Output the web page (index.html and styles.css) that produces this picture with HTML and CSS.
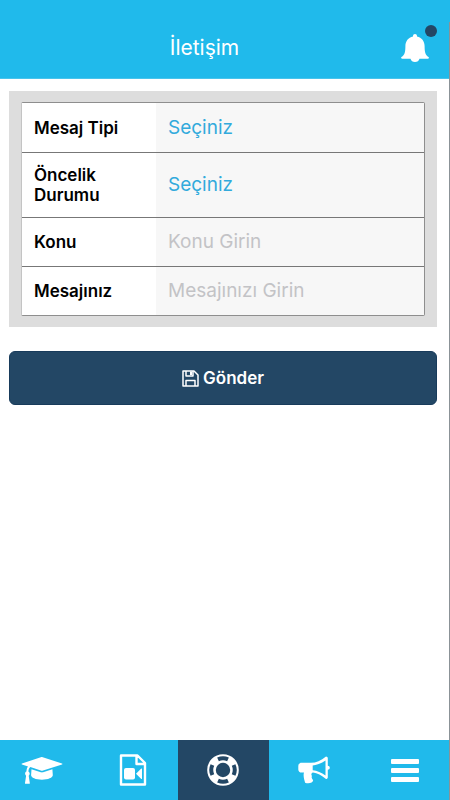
FILE: index.html
```html
<!DOCTYPE html>
<html lang="tr">
<head>
<meta charset="utf-8">
<meta name="viewport" content="width=device-width, initial-scale=1">
<title>İletişim</title>
<link rel="stylesheet" href="styles.css">
</head>
<body>
<div class="app">
  <header class="header">
    <h1 class="title">İletişim</h1>
    <button class="bell" type="button" aria-label="Bildirimler">
      <svg width="28" height="30" viewBox="0 0 28 30"><path fill="#fff" d="M14 1c1.200 0 2 .7 2 2v.4c4.700.9 7.600 4.800 7.600 9.600 0 6 .6 9 3.900 11 .7.500.4 1.700-.5 1.700h-8.500c-.4 2-2.300 3.300-4.500 3.300s-4.100-1.300-4.500-3.300H1c-.9 0-1.200-1.200-.5-1.700C3.800 22 4.400 19 4.400 13c0-4.800 2.900-8.700 7.600-9.600V3c0-1.300.8-2 2-2z"/></svg>
      <span class="dot"></span>
    </button>
  </header>
  <main class="main">
    <form class="form">
      <div class="card">
        <div class="fields">
          <div class="row">
            <label class="label" for="type">Mesaj Tipi</label>
            <select class="control" id="type"><option>Seçiniz</option></select>
          </div>
          <div class="row">
            <label class="label" for="priority">Öncelik Durumu</label>
            <select class="control" id="priority"><option>Seçiniz</option></select>
          </div>
          <div class="row">
            <label class="label" for="subject">Konu</label>
            <input class="control" id="subject" type="text" placeholder="Konu Girin">
          </div>
          <div class="row">
            <label class="label" for="message">Mesajınız</label>
            <input class="control" id="message" type="text" placeholder="Mesajınızı Girin">
          </div>
        </div>
      </div>
      <button class="submit" type="button">
        <svg width="17" height="17" viewBox="0 0 17 17" fill="none" stroke="#fff" stroke-width="1.500" stroke-linejoin="round"><path d="M1 1h11l4 4v11H1z"/><path d="M4 1v5h7V1M4 16v-5.500h9V16"/><path fill="#fff" stroke="none" d="M8 1.500h2V5H8z"/></svg>
        Gönder
      </button>
    </form>
  </main>
  <nav class="tabs">
    <a class="tab" href="#egitim" aria-label="Eğitim">
      <svg width="42" height="30" viewBox="0 0 42 30"><path fill="#fff" d="M21 2l20 6.500c.6.200.6.800 0 1L21.300 15.700h-.8L9.400 12.100C8.200 13 7.500 14.500 7.400 16.600c.8.500 1.300 1.200 1.300 2.100 0 .8-.4 1.500-1 2L8.800 28c.1.500-.2.800-.6.800H4.600c-.4 0-.7-.3-.6-.8l1.100-7.300c-.6-.5-1-1.200-1-2 0-.9.500-1.700 1.300-2.100.1-2 .6-3.900 1.600-5.200L1 9.500c-.6-.2-.6-.8 0-1L20.500 2z"/><path fill="#fff" d="M10.500 14.300l9.300 3c.8.200 1.500.2 2.300 0l9.300-3 .4 5.700c.2 2.600-4.800 4.700-10.900 4.700S9.900 22.600 10.100 20z"/></svg>
    </a>
    <a class="tab" href="#videolar" aria-label="Videolar">
      <svg width="28" height="32" viewBox="0 0 28 32"><path fill="none" stroke="#fff" stroke-width="2.400" stroke-linejoin="round" d="M2 1.500h16.500l7.500 7.500v21.500H2zM17.500 2v8H26"/><rect x="5" y="14" width="11" height="11.500" rx="2" fill="#fff"/><path fill="#fff" d="M17 19.700l5-5c.5-.5 1-.3 1 .4v9.300c0 .7-.5.900-1 .4z"/></svg>
    </a>
    <a class="tab active" href="#iletisim" aria-label="İletişim" aria-current="page">
      <svg width="32" height="32" viewBox="0 0 32 32"><circle cx="16" cy="16" r="11.500" fill="none" stroke="#fff" stroke-width="8.600"/><g fill="none" stroke="#234765" stroke-width="4"><path d="M11 5.400a11.700 11.700 0 0 1 10 0M26.600 11a11.700 11.700 0 0 1 0 10M21 26.600a11.700 11.700 0 0 1-10 0M5.400 21a11.700 11.700 0 0 1 0-10"/></g></svg>
    </a>
    <a class="tab" href="#duyurular" aria-label="Duyurular">
      <svg width="32" height="28" viewBox="0 0 32 28"><path fill="#fff" fill-rule="evenodd" d="M28 .5c1 0 1.800.8 1.800 1.800v7.400c1.100 0 2 .9 2 2s-.9 2-2 2v7.500c0 1-.8 1.800-1.800 1.800-4.500-3.700-8.700-5.900-13-6.500-1.800.6-2.100 2.500-1 3.600-.9 1.500.2 2.700 1.100 4 .3 2.900-4.600 4-8 2.700C6.400 24 4.900 20 6 16.600H3.500C1.800 16.600.3 15.200.3 13.400V9.900C.3 8.100 1.800 6.800 3.500 6.800H13C18 6.800 23 4.600 28 .5zM27.500 4.400C23.500 7.400 19 9 14.700 9.400v4.900c4.300.5 8.800 2.200 12.800 5.200z"/></svg>
    </a>
    <a class="tab" href="#menu" aria-label="Menü">
      <svg width="28" height="24" viewBox="0 0 28 24" fill="#fff"><rect width="28" height="5" y="1" rx="1"/><rect width="28" height="5" y="10" rx="1"/><rect width="28" height="5" y="19" rx="1"/></svg>
    </a>
  </nav>
</div>
</body>
</html>
```
FILE: styles.css
```css
* { box-sizing: border-box; }

body {
  margin: 0;
  background: #fff;
  font-family: Inter, "Liberation Sans", sans-serif;
}

.app {
  position: relative;
  display: flex;
  flex-direction: column;
  min-height: 100vh;
  overflow: hidden;
}

/* Thin rule along the right side, below the status bar */
.app::after {
  content: "";
  position: absolute;
  top: 22px;
  right: 0;
  bottom: 0;
  width: 1px;
  background: #8b9297;
}

.header {
  display: grid;
  grid-template-columns: 56px 1fr 56px;
  align-items: center;
  padding: 18px 7px 0 0;
  height: 79px;
  background: #20baeb;
  border-bottom: 1px solid #48c4ec;
}

.title {
  grid-column: 2;
  margin: 0 34px 0 0;
  color: #fff;
  font-size: 21px;
  line-height: 24px;
  font-weight: 400;
  text-align: center;
}

.bell {
  position: relative;
  justify-self: center;
  padding: 0;
  border: 0;
  background: none;
  line-height: 0;
}

.dot {
  position: absolute;
  top: -8px;
  right: -8px;
  width: 12px;
  height: 12px;
  border-radius: 50%;
  background: #234765;
}

.main {
  flex: 1;
  padding: 12px 13px 24px 9px;
}

.form {
  display: flex;
  flex-direction: column;
  gap: 24px;
}

.card {
  padding: 11px 12px;
  background: #ddd;
}

.fields {
  border: 1px solid #8e8e8e;
  border-left-color: #c4c4c4;
  border-radius: 2px;
}

.row {
  display: grid;
  grid-template-columns: 1fr 2fr;
  min-height: 49px;
  background: #fff;
}

.row + .row { border-top: 1px solid #777; }

.label {
  display: flex;
  align-items: center;
  padding: 12px;
  color: #000;
  font-size: 17px;
  line-height: 20px;
  font-weight: 600;
}

.control {
  width: 100%;
  min-width: 0;
  margin: 0;
  padding: 0 12px;
  border: 0;
  border-radius: 0;
  background: #f7f7f7;
  color: #32aadc;
  font: 400 19px/24px Inter, "Liberation Sans", sans-serif;
  appearance: none;
}

.control::placeholder { color: #c3c3c6; opacity: 1; }

.submit {
  display: flex;
  align-items: center;
  justify-content: center;
  gap: 4px;
  height: 54px;
  padding: 0;
  border: 1px solid #183b5b;
  border-radius: 6px;
  background: #234765;
  color: #fff;
  font: 600 17px/20px Inter, "Liberation Sans", sans-serif;
}

.tabs {
  display: grid;
  grid-template-columns: repeat(5, 1fr);
  height: 60px;
  margin-left: -3px;
  background: #20baeb;
}

.tab {
  display: flex;
  align-items: center;
  justify-content: center;
}

.active { background: #234765; }
```
